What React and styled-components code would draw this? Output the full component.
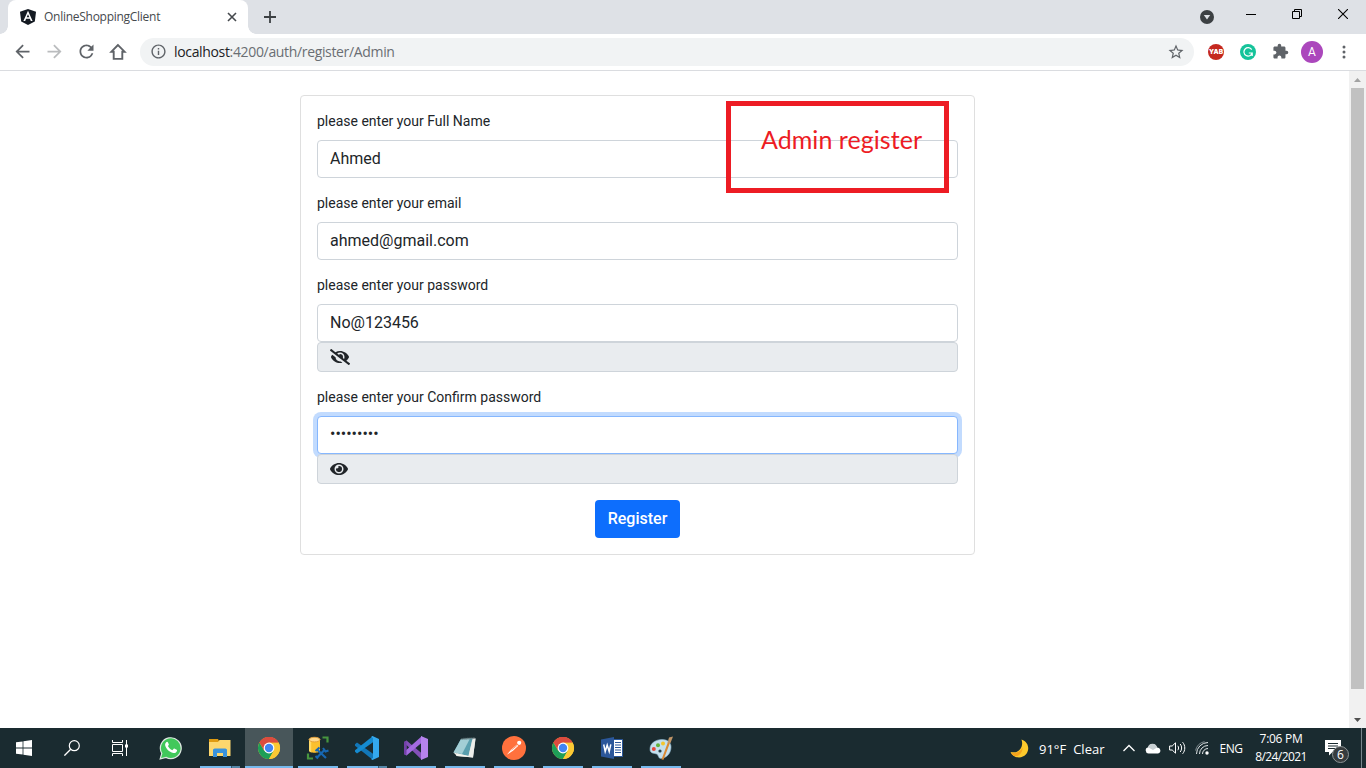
import React from "react";
import styled, { createGlobalStyle, css } from "styled-components";
import {
  MdArrowBack,
  MdArrowForward,
  MdRefresh,
  MdInfoOutline,
  MdStarBorder,
  MdExtension,
} from "react-icons/md";
import { FaEye, FaEyeSlash } from "react-icons/fa";

const GlobalStyle = createGlobalStyle`
  * { box-sizing: border-box; }
  body { margin: 0; overflow: hidden; background: #fff; }
  svg { display: block; flex: none; }
`;

const systemFont = `"Open Sans", "Noto Sans", sans-serif`;

const Screen = styled.div`
  width: 1366px;
  height: 768px;
  display: flex;
  flex-direction: column;
  font-family: ${systemFont};
`;

/* ---------- browser title bar ---------- */

const TitleBar = styled.header`
  height: 34px;
  flex: none;
  display: flex;
  background: #dee1e6;
  padding-left: 8px;
`;

const Tab = styled.div`
  position: relative;
  width: 240px;
  height: 34px;
  display: flex;
  align-items: center;
  padding: 0 10px 0 12px;
  background: #fff;
  border-radius: 8px 8px 0 0;
  &::before,
  &::after {
    content: "";
    position: absolute;
    bottom: 0;
    width: 8px;
    height: 8px;
  }
  &::before {
    left: -8px;
    background: radial-gradient(circle at 0 0, transparent 7.5px, #fff 8px);
  }
  &::after {
    right: -8px;
    background: radial-gradient(circle at 100% 0, transparent 7.5px, #fff 8px);
  }
`;

const TabTitle = styled.span`
  flex: 1;
  margin-left: 8px;
  font-size: 12px;
  line-height: 16px;
  letter-spacing: -0.27px;
  white-space: nowrap;
  color: #45494d;
`;

const NewTab = styled.div`
  width: 44px;
  display: flex;
  align-items: center;
  justify-content: center;
`;

const WindowControls = styled.div`
  margin-left: auto;
  display: flex;
`;

const WindowControl = styled.div`
  width: ${(p) => p.$width || 46}px;
  height: ${(p) => p.$height || 29}px;
  display: flex;
  align-items: center;
  justify-content: center;
`;

/* ---------- browser toolbar ---------- */

const Toolbar = styled.nav`
  height: 37px;
  flex: none;
  display: flex;
  align-items: center;
  padding: 0 6px 1px 6px;
  border-bottom: 1px solid #dadce0;
  background: #fff;
`;

const ToolButton = styled.div`
  width: 32px;
  height: 32px;
  flex: none;
  display: flex;
  align-items: center;
  justify-content: center;
  color: ${(p) => (p.$muted ? "#babcbe" : "#5f6368")};
`;

const AddressBar = styled.div`
  flex: 1;
  height: 28px;
  margin: 0 6px;
  padding: 0 9px 0 10px;
  display: flex;
  align-items: center;
  border-radius: 14px;
  background: #f1f3f4;
  color: #5f6368;
`;

const Url = styled.span`
  flex: 1;
  margin-left: 7px;
  font-size: 14px;
  line-height: 20px;
  letter-spacing: -0.34px;
  color: #6a6e73;
  b {
    font-weight: 400;
    color: #202124;
  }
`;

const Avatar = styled.div`
  width: 22px;
  height: 22px;
  border-radius: 50%;
  background: #ab47bc;
  color: #fff;
  font: 12px/22px Roboto, sans-serif;
  text-align: center;
`;

const Extension = styled.div`
  width: 16px;
  height: 16px;
  border-radius: 50%;
  background: ${(p) => p.$color};
  color: #fff;
  display: flex;
  align-items: center;
  justify-content: center;
  font: 900 6.5px/16px Inter, sans-serif;
`;

/* ---------- page ---------- */

const Viewport = styled.div`
  flex: 1;
  display: flex;
  min-height: 0;
`;

const Page = styled.main`
  flex: 1;
  padding: 24px 0 0 300px;
  font-family: Roboto, sans-serif;
  color: #212529;
`;

const Card = styled.form`
  position: relative;
  width: 675px;
  height: 460px;
  padding: 16px;
  border: 1px solid #dfdfdf;
  border-radius: 4px;
  display: flex;
  flex-direction: column;
`;

const Field = styled.div`
  margin-bottom: 16px;
`;

const Label = styled.div`
  height: 20px;
  margin-bottom: 8px;
  font-size: 14px;
  line-height: 18px;
`;

const Control = styled.div`
  height: 38px;
  padding: 6px 12px;
  border: 1px solid #ced4da;
  border-radius: 4px;
  background: #fff;
  font-size: 16px;
  line-height: 24px;
  ${(p) =>
    p.$focused &&
    css`
      line-height: 22px;
      border-color: #86b7fe;
      box-shadow: 0 0 0 4px rgba(13, 110, 253, 0.25);
    `}
`;

const Addon = styled.div`
  position: relative;
  height: 30px;
  padding: 0 12px;
  display: flex;
  align-items: center;
  border: 1px solid #ced4da;
  border-radius: 4px;
  background: #e9ecef;
`;

const SubmitButton = styled.button`
  align-self: center;
  width: 85px;
  height: 38px;
  padding: 0;
  border: 0;
  border-radius: 4px;
  background: #0d6efd;
  color: #fff;
  font: 500 16px/24px Roboto, sans-serif;
`;

const Callout = styled.div`
  position: absolute;
  left: 425px;
  top: 5px;
  width: 223px;
  height: 92px;
  padding: 18px 0 0 30px;
  border: 5px solid #ed1c24;
  color: #ed1c24;
  font: 25px/30px Lato, sans-serif;
  letter-spacing: 0.05px;
  white-space: nowrap;
`;

const ScrollTrack = styled.div`
  width: 17px;
  display: flex;
  flex-direction: column;
  align-items: center;
  background: #f1f1f1;
`;

const ScrollArrow = styled.div`
  height: 17px;
  width: 17px;
  display: flex;
  align-items: center;
  justify-content: center;
`;

const ScrollThumb = styled.div`
  width: 13px;
  height: 601px;
  margin-bottom: auto;
  background: #c1c1c1;
`;

/* ---------- taskbar ---------- */

const Taskbar = styled.footer`
  height: 40px;
  flex: none;
  display: flex;
  background: #1a2b30;
  color: #fff;
`;

const SystemButton = styled.div`
  width: 48px;
  height: 40px;
  display: flex;
  align-items: center;
  justify-content: center;
`;

const Apps = styled.div`
  display: flex;
  gap: 1px;
  margin-left: 3px;
`;

const line = "#76b9ed";
const AppButton = styled.div`
  width: 48px;
  height: 40px;
  padding: 0 ${(p) => (p.$active ? 0 : 4)}px;
  display: flex;
  flex-direction: column;
  align-items: center;
  background: ${(p) => (p.$active ? "#48565a" : "transparent")};
`;

const AppIcon = styled.div`
  height: 38px;
  padding-top: 2px;
  display: flex;
  align-items: center;
`;

const Underline = styled.div`
  align-self: stretch;
  height: 2px;
  background: ${(p) =>
    p.$stacked
      ? `linear-gradient(90deg, ${line} 31px, #35586e 31px, #35586e 32px, #5587a8 32px)`
      : line};
`;

const Tray = styled.div`
  margin-left: auto;
  width: 362px;
  display: flex;
  align-items: center;
`;

const TraySlot = styled.div`
  width: ${(p) => p.$width}px;
  flex: none;
  display: flex;
  justify-content: center;
  font-size: 12px;
  letter-spacing: ${(p) => p.$spacing || 0}px;
`;

const Weather = styled.div`
  width: 85px;
  flex: none;
  display: flex;
  gap: 7px;
  padding-left: 5px;
  padding-top: 1px;
  font-size: 13px;
`;

const Clock = styled.div`
  width: 70px;
  flex: none;
  font-size: 12px;
  line-height: 18px;
  text-align: center;
`;

const ClockLine = styled.div`
  letter-spacing: ${(p) => p.$spacing}px;
  white-space: nowrap;
`;

const ActionCenter = styled.div`
  position: relative;
  width: 46px;
  height: 40px;
  padding: 12px 0 0 9px;
  border-right: 1px solid #76868c;
`;

const Badge = styled.div`
  position: absolute;
  left: 16px;
  top: 18px;
  width: 17px;
  height: 17px;
  border-radius: 50%;
  border: 1px solid #8d9496;
  background: #373c3e;
  font-size: 12px;
  line-height: 15px;
  text-align: center;
`;

/* ---------- drawings ---------- */

const AngularIcon = () => (
  <svg width="16" height="16" viewBox="0 0 16 16">
    <path d="M8 0l8 2.8-1.2 9.8L8 16l-6.8-3.4L0 2.8z" fill="#141a22" />
    <path
      d="M8 1.8L3.4 12h1.8l.9-2.3h3.8l.9 2.3h1.8L8 1.8zm0 3.4l1.3 3H6.7z"
      fill="#fff"
    />
  </svg>
);

const HomeIcon = () => (
  <svg width="18" height="18" viewBox="0 0 18 18">
    <path
      d="M9 2L2.4 8.7h2.3v7.2h8.6V8.7h2.3z"
      fill="none"
      stroke="#5f6368"
      strokeWidth="1.9"
    />
  </svg>
);

const WhatsappIcon = () => (
  <svg width="24" height="24" viewBox="0 0 24 24">
    <path
      d="M1.2 22.8l1.6-5.4A10.4 10.4 0 1 1 7 21.4z"
      fill="#41c85b"
      stroke="#dfe8e2"
      strokeWidth="1.2"
    />
    <path
      d="M7 6.4c.8-.9 1.6-.8 2 0l.8 1.9c.2.5-.1 1-.9 1.8 1 2 2.300 3.300 4.500 4.200l1.300-1.500c.3-.3.6-.3 1-.1l2 1c.5.3.4.6.3 1-.5 1.800-2 2.500-3.700 2.200C10 16 6.700 12.500 6.100 9c-.1-1 .2-1.900.9-2.600z"
      fill="#fff"
    />
  </svg>
);

const ExplorerIcon = () => (
  <svg width="22" height="20" viewBox="0 0 22 20">
    <path d="M0 1h9l1 2v3H0z" fill="#e09b11" />
    <path d="M0 4h9l1.500-2H21.500v16H0z" fill="#fdd76e" />
    <path d="M4 19v-7.500L5.500 10.500h11L18 11.500V19h-4v-4H8v4z" fill="#3a93dd" />
  </svg>
);

const ChromeIcon = () => (
  <svg width="24" height="24" viewBox="0 0 24 24">
    <circle cx="12" cy="12" r="11" fill="#fcc934" />
    <path d="M12 12L2.470 6.500A11 11 0 0 1 21.530 6.500H12z" fill="#dc4437" />
    <path d="M12 12L7.240 14.750 2.470 6.500A11 11 0 0 0 12 23l4.760-8.250z" fill="#1e9e58" />
    <path d="M12 6.500h9.530A11 11 0 0 1 12 23l4.760-8.250z" fill="#fcc934" />
    <path d="M2.470 6.500L7.240 14.750 12 12V6.500h9.530A11 11 0 0 0 2.470 6.500z" fill="#dc4c3f" />
    <circle cx="12" cy="12" r="5.400" fill="#fff" />
    <circle cx="12" cy="12" r="4.200" fill="#4285f4" />
  </svg>
);

const SqlStudioIcon = () => (
  <svg width="24" height="24" viewBox="0 0 24 24">
    <path d="M3 4v10.500c0 3 11 3 11 0V4z" fill="#fbc02e" />
    <path d="M3 4v10.500c0 .8.900 1.400 2.200 1.800V4z" fill="#ffda69" />
    <ellipse cx="8.500" cy="3.600" rx="5.500" ry="2.300" fill="#ffd98c" stroke="#e9a43a" />
    <path d="M16.500 1.500h5v5M2 17.500v5h5" fill="none" stroke="#47963f" strokeWidth="2.200" />
    <path d="M10.500 22L19 13.500M11 13.500l9 8.500" stroke="#1767b1" strokeWidth="2.200" />
    <path d="M9.500 15l4-3.500M17 12l2.500 3.500 3-1M9.500 20l2.500 2.500" fill="none" stroke="#1767b1" strokeWidth="2" />
  </svg>
);

const VsCodeIcon = () => (
  <svg width="24" height="24" viewBox="0 0 24 24">
    <path d="M0 8.300l2-1.700 16 11.100V24L0 9.800z" fill="#1277b8" />
    <path d="M0 15.700l2 1.800L18 6.300V0L0 14.200z" fill="#158bd0" />
    <path d="M17.500 0L24 3v18l-6.500 3-1.500-1 2-1V2l-2-1z" fill="#34a9ee" />
  </svg>
);

const VisualStudioIcon = () => (
  <svg width="24" height="24" viewBox="0 0 24 24">
    <path d="M0 6l2.500-1.500L18 17.500V24L2.500 9v6.500L0 18z" fill="#8450ba" />
    <path d="M0 18l2.500 1.500L18 6.500V0L0 16z" fill="#a36be0" />
    <path d="M17 0l7 3v18l-7 3z" fill="#b683ed" />
    <path d="M0 6l2.500-1.500V19.500L0 18z" fill="#7240a8" />
  </svg>
);

const NotepadIcon = () => (
  <svg width="24" height="24" viewBox="0 0 24 24">
    <path d="M9 3l13.500-1L20 21.500 3 20z" fill="#d3dbdb" />
    <path d="M8 3l11.500-.5L15.500 20 .5 16.500z" fill="#599fae" />
    <path d="M8 3l9-.4L9 18 .5 16.500z" fill="#a2ced5" />
    <path d="M.5 16.500l15 3.500 5 1.500L4 20z" fill="#f4f4ee" />
    <path d="M19.500 3.500L15.500 20l4.500 1.500L22.500 3z" fill="#eceeea" />
    <path d="M8.500 3L22 2" stroke="#596c6f" strokeWidth="2" strokeDasharray="1 1" />
  </svg>
);

const PostmanIcon = () => (
  <svg width="24" height="24" viewBox="0 0 24 24">
    <circle cx="12" cy="12" r="12" fill="#ff713d" />
    <path d="M4.800 18.700l4.700-5.500 5.500-4.800 1.400 1.300-5.400 5z" fill="#fff" />
    <circle cx="17.200" cy="6.800" r="2.100" fill="#fff" />
    <path d="M9.500 14l6-5M15.200 8.300l1 1" stroke="#ff713d" strokeWidth=".7" />
  </svg>
);

const WordIcon = () => (
  <svg width="22" height="22" viewBox="0 0 22 22">
    <path d="M12 2.500h9.500v17H12z" fill="#fff" stroke="#2b579a" />
    <path d="M14 5.500h6M14 8h6M14 10.500h6M14 13h6M14 15.500h6" stroke="#2b579a" />
    <path d="M0 2.500L13 0v22L0 19.500z" fill="#2b579a" />
    <path d="M2.700 7.500l1.500 7 2-6.500 2 6.500 1.600-7.200" fill="none" stroke="#fff" strokeWidth="1.500" />
  </svg>
);

const PaintIcon = () => (
  <svg width="24" height="24" viewBox="0 0 24 24">
    <path
      d="M1 13C1 7 7 3.500 13 3.500S22 7 22 11c0 6-4 11-10 11.500-3 .2-2-3.500-4.500-4.500C5 17 1 18 1 13z"
      fill="#c4dfed"
      stroke="#8db6cc"
      strokeWidth=".6"
    />
    <circle cx="4.800" cy="13" r="2" fill="#e5483d" />
    <circle cx="9" cy="9.200" r="2" fill="#62b33c" />
    <circle cx="14" cy="7.500" r="2" fill="#f3c52d" />
    <circle cx="11" cy="15" r="1.600" fill="#243c46" />
    <path d="M12.500 23.500L19 6l2 .7-6.500 17z" fill="#d98934" />
    <path d="M18.500 7L20 1.500 24 .5 21.500 7z" fill="#c09568" />
  </svg>
);

const apps = [
  { name: "WhatsApp", Icon: WhatsappIcon, idle: true },
  { name: "File Explorer", Icon: ExplorerIcon, stacked: true },
  { name: "Chrome", Icon: ChromeIcon, active: true },
  { name: "SQL Studio", Icon: SqlStudioIcon },
  { name: "VS Code", Icon: VsCodeIcon, stacked: true },
  { name: "Visual Studio", Icon: VisualStudioIcon },
  { name: "Notepad", Icon: NotepadIcon },
  { name: "Postman", Icon: PostmanIcon },
  { name: "Chrome profile", Icon: ChromeIcon },
  { name: "Word", Icon: WordIcon },
  { name: "Paint", Icon: PaintIcon },
];

const fields = [
  { label: "please enter your Full Name", value: "Ahmed" },
  { label: "please enter your email", value: "ahmed@gmail.com" },
  {
    label: "please enter your password",
    value: "No@123456",
    toggle: <FaEyeSlash style={{ width: 20, height: 16 }} />,
  },
  {
    label: "please enter your Confirm password",
    value: "•••••••••",
    focused: true,
    toggle: <FaEye style={{ width: 18, height: 16 }} />,
  },
];

function BrowserChrome() {
  return (
    <>
      <TitleBar>
        <Tab>
          <AngularIcon />
          <TabTitle>OnlineShoppingClient</TabTitle>
          <svg width="12" height="12" viewBox="0 0 12 12">
            <path d="M2 2l8 8M10 2l-8 8" stroke="#45494d" strokeWidth="1.600" />
          </svg>
        </Tab>
        <NewTab>
          <svg width="12" height="12" viewBox="0 0 12 12">
            <path d="M6 0v12M0 6h12" stroke="#3c4043" strokeWidth="1.800" />
          </svg>
        </NewTab>
        <WindowControls>
          <WindowControl $width={42} $height={34}>
            <svg width="14" height="14" viewBox="0 0 14 14">
              <circle cx="7" cy="7" r="7" fill="#3c4043" />
              <path d="M3.800 5h6.400L7 9.500z" fill="#dee1e6" />
            </svg>
          </WindowControl>
          <WindowControl $height={28}>
            <svg width="10" height="10" viewBox="0 0 10 10">
              <path d="M0 5.500h10" stroke="#000" />
            </svg>
          </WindowControl>
          <WindowControl $height={28}>
            <svg width="10" height="10" viewBox="0 0 10 10">
              <path d="M.5 2.500h7v7h-7zM2.500 2.500v-2h7v7h-2" fill="none" stroke="#000" />
            </svg>
          </WindowControl>
          <WindowControl $height={28}>
            <svg width="10" height="10" viewBox="0 0 10 10">
              <path d="M0 0l10 10M10 0L0 10" stroke="#000" strokeWidth="1.100" />
            </svg>
          </WindowControl>
        </WindowControls>
      </TitleBar>
      <Toolbar>
        <ToolButton><MdArrowBack size={21} /></ToolButton>
        <ToolButton $muted><MdArrowForward size={21} /></ToolButton>
        <ToolButton><MdRefresh size={21} /></ToolButton>
        <ToolButton><HomeIcon /></ToolButton>
        <AddressBar>
          <MdInfoOutline size={17} />
          <Url><b>localhost</b>:4200/auth/register/Admin</Url>
          <MdStarBorder size={18} />
        </AddressBar>
        <ToolButton><Extension $color="#c5281f">YAB</Extension></ToolButton>
        <ToolButton>
          <Extension $color="#15c39a">
            <svg width="10" height="10" viewBox="0 0 10 10">
              <path d="M8.700 2.600A4.200 4.200 0 1 0 9.200 6H5.800M9.200 5.500V9" fill="none" stroke="#fff" strokeWidth="1.200" />
            </svg>
          </Extension>
        </ToolButton>
        <ToolButton><MdExtension size={17} /></ToolButton>
        <ToolButton><Avatar>A</Avatar></ToolButton>
        <ToolButton>
          <svg width="4" height="14" viewBox="0 0 4 14" fill="#5f6368">
            <circle cx="2" cy="2" r="1.500" />
            <circle cx="2" cy="7" r="1.500" />
            <circle cx="2" cy="12" r="1.500" />
          </svg>
        </ToolButton>
      </Toolbar>
    </>
  );
}

function RegisterForm() {
  return (
    <Card>
      {fields.map((f) => (
        <Field key={f.label}>
          <Label>{f.label}</Label>
          <Control $focused={f.focused}>{f.value}</Control>
          {f.toggle && <Addon>{f.toggle}</Addon>}
        </Field>
      ))}
      <SubmitButton type="button">Register</SubmitButton>
      <Callout>Admin register</Callout>
    </Card>
  );
}

function WindowsTaskbar() {
  return (
    <Taskbar>
      <SystemButton>
        <svg width="16" height="16" viewBox="0 0 16 16" fill="#fff">
          <path d="M0 2.300l6.600-.9v6.200H0zM7.400 1.200L16 0v7.600H7.400zM0 8.400h6.600v6.200L0 13.700zM7.400 8.400H16V16l-8.600-1.200z" />
        </svg>
      </SystemButton>
      <SystemButton>
        <svg width="16" height="16" viewBox="0 0 16 16">
          <circle cx="10.300" cy="5.700" r="5" fill="none" stroke="#fff" strokeWidth="1.200" />
          <path d="M6.700 9.300L.4 15.600" stroke="#fff" strokeWidth="1.300" />
        </svg>
      </SystemButton>
      <SystemButton>
        <svg width="16" height="16" viewBox="0 0 16 16">
          <path d="M.5 0v2.500h10V0M.5 4.500h10v7H.5zM.5 16v-2.500h10V16M14.500 0v16" fill="none" stroke="#fff" />
          <path d="M13 4.500h3v3h-3z" fill="#fff" />
        </svg>
      </SystemButton>
      <Apps>
        {apps.map(({ name, Icon, idle, active, stacked }) => (
          <AppButton key={name} $active={active}>
            <AppIcon><Icon /></AppIcon>
            {!idle && <Underline $stacked={stacked} />}
          </AppButton>
        ))}
      </Apps>
      <Tray>
        <TraySlot $width={30}>
          <svg width="19" height="19" viewBox="0 0 19 19">
            <path d="M11.500.5C22 4 19.500 18.500 9 18.500c-4 0-7-2-8.500-5.500C9 15 14 8 11.500.5z" fill="#fdc92c" />
            <path d="M1 13.500c5 1.500 10-1 11.500-5C13 14 8 18 4.500 17 3 16.500 1.500 15 1 13.500z" fill="#f5a31d" />
          </svg>
        </TraySlot>
        <Weather>
          <span>91°F</span>
          <span>Clear</span>
        </Weather>
        <TraySlot $width={20}>
          <svg width="12" height="8" viewBox="0 0 12 8">
            <path d="M.5 7L6 1.500 11.500 7" fill="none" stroke="#fff" strokeWidth="1.300" />
          </svg>
        </TraySlot>
        <TraySlot $width={28}>
          <svg width="16" height="11" viewBox="0 0 16 11">
            <path d="M3.500 10.500a3.200 3.200 0 0 1-.3-6.300A4.600 4.600 0 0 1 12 4.400a3.100 3.100 0 0 1 1 6.100z" fill="#fff" />
            <path d="M3 4.200A4.600 4.600 0 0 1 12 4.400L8 7z" fill="#c9d0d3" />
          </svg>
        </TraySlot>
        <TraySlot $width={20}>
          <svg width="17" height="14" viewBox="0 0 17 14">
            <path d="M.6 5h2.600l3.300-3.200v10.400L3.200 9H.6zM8.800 4.800c1 1.200 1 3.200 0 4.400M11.200 3c1.900 2.200 1.900 5.800 0 8M13.600 1.200c2.900 3.300 2.900 8.300 0 11.600" fill="none" stroke="#fff" />
          </svg>
        </TraySlot>
        <TraySlot $width={29}>
          <svg width="14" height="14" viewBox="0 0 14 14">
            <path d="M1.500 13A11.500 11.500 0 0 1 13 1.500M4.500 13A8.500 8.500 0 0 1 13 4.500M7.500 13A5.500 5.500 0 0 1 13 7.500" fill="none" stroke="#e1e6e8" />
            <path d="M.5 9.500A12 12 0 0 1 9.500.6" fill="none" stroke="#7c888d" />
            <circle cx="12" cy="12" r="1.700" fill="#fff" />
          </svg>
        </TraySlot>
        <TraySlot $width={30} $spacing={-0.4}>ENG</TraySlot>
        <Clock>
          <ClockLine $spacing={-0.3}>7:06 PM</ClockLine>
          <ClockLine $spacing={-0.6}>8/24/2021</ClockLine>
        </Clock>
        <ActionCenter>
          <svg width="16" height="16" viewBox="0 0 16 16">
            <path d="M0 0h16v12H7.500L4 15.500V12H0z" fill="#fff" />
            <path d="M3 3.500h10M3 6h10M3 8.500h7" stroke="#1a2b30" />
          </svg>
          <Badge>6</Badge>
        </ActionCenter>
      </Tray>
    </Taskbar>
  );
}

export default function App() {
  return (
    <Screen>
      <GlobalStyle />
      <BrowserChrome />
      <Viewport>
        <Page>
          <RegisterForm />
        </Page>
        <ScrollTrack>
          <ScrollArrow>
            <svg width="7" height="4" viewBox="0 0 7 4">
              <path d="M0 4L3.500 0 7 4z" fill="#a3a3a3" />
            </svg>
          </ScrollArrow>
          <ScrollThumb />
          <ScrollArrow>
            <svg width="7" height="4" viewBox="0 0 7 4">
              <path d="M0 0h7L3.500 4z" fill="#505050" />
            </svg>
          </ScrollArrow>
        </ScrollTrack>
      </Viewport>
      <WindowsTaskbar />
    </Screen>
  );
}
